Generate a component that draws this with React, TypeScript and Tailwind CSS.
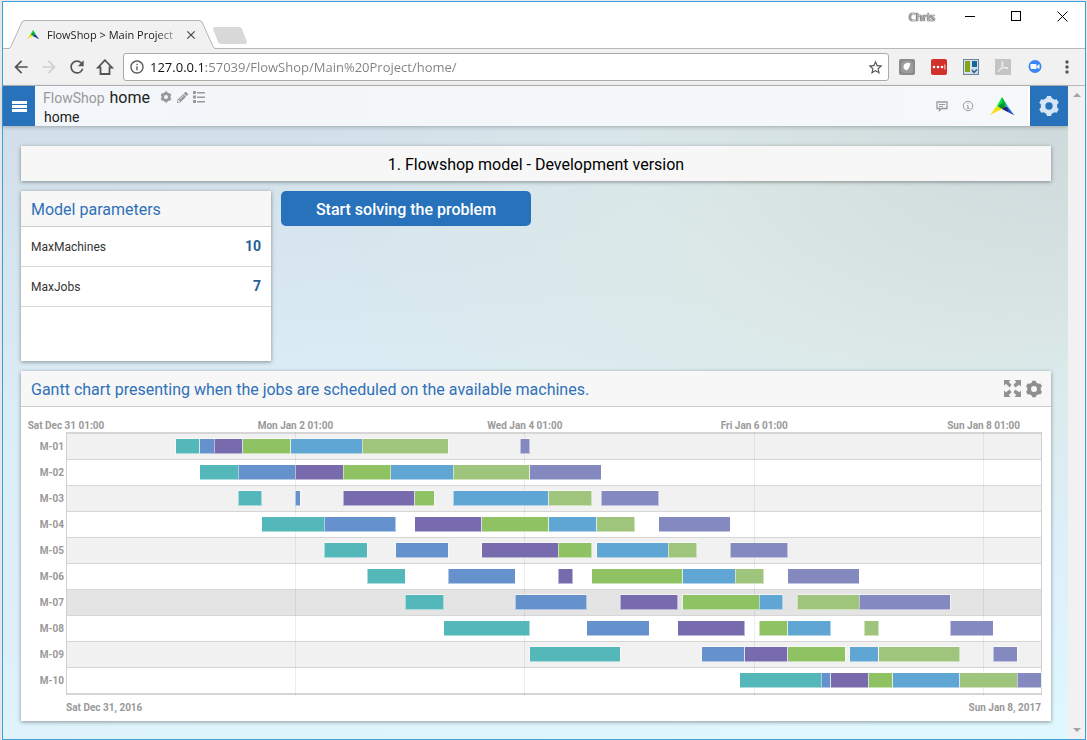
import { MdArrowBack, MdArrowForward, MdClose, MdInfoOutline, MdMoreVert, MdRefresh, MdStarBorder } from "react-icons/md";
import { FaPencilAlt } from "react-icons/fa";

const TOTAL_HOURS = 204;
const ROW_HEIGHT = 26;

const JOB_COLORS = ["#54b8ba", "#6592cd", "#776bad", "#8fc263", "#60a6d5", "#9ec57b", "#848ac0"];

type Machine = { name: string; row: string; jobs: [number, number][] };

const machines: Machine[] = [
  { name: "M-01", row: "#f1f1f1", jobs: [[23, 28], [28, 31], [31, 37], [37, 47], [47, 62], [62, 80], [95, 97]] },
  { name: "M-02", row: "#ffffff", jobs: [[28, 36], [36, 48], [48, 58], [58, 68], [68, 81], [81, 97], [97, 112]] },
  { name: "M-03", row: "#f1f1f1", jobs: [[36, 41], [48, 49], [58, 73], [73, 77], [81, 101], [101, 110], [112, 124]] },
  { name: "M-04", row: "#ffffff", jobs: [[41, 54], [54, 69], [73, 87], [87, 101], [101, 111], [111, 119], [124, 139]] },
  { name: "M-05", row: "#f1f1f1", jobs: [[54, 63], [69, 80], [87, 103], [103, 110], [111, 126], [126, 132], [139, 151]] },
  { name: "M-06", row: "#ffffff", jobs: [[63, 71], [80, 94], [103, 106], [110, 129], [129, 140], [140, 146], [151, 166]] },
  { name: "M-07", row: "#e4e4e4", jobs: [[71, 79], [94, 109], [116, 128], [129, 145], [145, 150], [153, 166], [166, 185]] },
  { name: "M-08", row: "#ffffff", jobs: [[79, 97], [109, 122], [128, 142], [145, 151], [151, 160], [167, 170], [185, 194]] },
  { name: "M-09", row: "#f1f1f1", jobs: [[97, 116], [133, 142], [142, 151], [151, 163], [164, 170], [170, 187], [194, 199]] },
  { name: "M-10", row: "#ffffff", jobs: [[141, 158], [158, 160], [160, 168], [168, 173], [173, 187], [187, 199], [199, 204]] },
];

const ticks = [
  { hour: 0, label: "Sat Dec 31 01:00" },
  { hour: 48, label: "Mon Jan 2 01:00" },
  { hour: 96, label: "Wed Jan 4 01:00" },
  { hour: 144, label: "Fri Jan 6 01:00" },
  { hour: 192, label: "Sun Jan 8 01:00" },
];

const pct = (hour: number) => `${(hour / TOTAL_HOURS) * 100}%`;

function Logo({ className }: { className: string }) {
  return (
    <svg viewBox="0 0 24 18" className={className} aria-hidden="true">
      <path d="M12 0 7 9l5 3z" fill="#00e63c" />
      <path d="M12 0 17 8l-5 4z" fill="#0ab43a" />
      <path d="M12 6 7.500 10l4.500 2 5-1z" fill="#0b8a33" />
      <path d="M7 9 0 18l12-6z" fill="#ffd91a" />
      <path d="M7 9 4 13l8-1z" fill="#d9e600" />
      <path d="M15 5l9 13-12-6 4.500-1z" fill="#3fb4f5" />
      <path d="M12 12l4.500-2.500L24 18z" fill="#26237e" />
      <path d="M17 11.500l7 6.500-5-2.500z" fill="#3d5df0" />
    </svg>
  );
}

function Gear({ className }: { className: string }) {
  return (
    <svg viewBox="0 0 24 24" className={className} aria-hidden="true">
      <circle cx="12" cy="12" r="6.500" fill="none" stroke="currentColor" strokeWidth="5" />
      {[0, 60, 120, 180, 240, 300].map((angle) => (
        <path key={angle} d="M7.500 5.500 9 3.500 9.800 1h4.400L15 3.500l1.500 2z" fill="currentColor" transform={`rotate(${angle} 12 12)`} />
      ))}
    </svg>
  );
}

function Expand() {
  return (
    <svg viewBox="0 0 18 18" className="size-[17px]" fill="#929292" aria-hidden="true">
      <path d="M0 0h7L5 2l3 3-2 3-4-4-2 2zM18 0v7l-2-2-4 3-2-3 3-3-2-2zM0 18v-7l2 2 4-3 2 3-3 3 2 2zM18 18h-7l2-2-3-3 2-3 4 3 2-2z" />
    </svg>
  );
}

function TabStrip() {
  return (
    <div className="flex h-[46px] items-end bg-white">
      <div className="relative -mb-px ml-0.5 flex h-[29px] w-[214px] items-center pl-[22px]">
        <svg className="absolute inset-0 size-full" viewBox="0 0 214 29" preserveAspectRatio="none" aria-hidden="true">
          <path d="M0 28.500h3q2 0 3-2L17 2q1-1.500 3-1.500H194q2 0 3 1.500l11 24.500q1 2 3 2h3" fill="#f1f1f1" stroke="#b4b4b4" />
          <path d="M5 28.500h204" stroke="#f1f1f1" />
        </svg>
        <Logo className="relative mr-2 h-[11px] w-3" />
        <span className="relative w-[133px] font-['Open_Sans',sans-serif] text-[11px] leading-4 whitespace-nowrap text-[#222] [mask-image:linear-gradient(to_right,#000_82%,rgba(0,0,0,0.15))]">
          FlowShop &gt; Main Project
        </span>
        <button aria-label="Close tab" className="relative ml-1 text-[#444]">
          <MdClose className="size-[14px]" />
        </button>
      </div>
      <button aria-label="New tab" className="-ml-1.5 mb-1">
        <svg viewBox="0 0 34 17" className="h-[17px] w-[34px]" aria-hidden="true">
          <path d="M2 0h24q2 0 3 2l5 13q0 2-2 2H8q-2 0-3-2L0 2q0-2 2-2z" fill="#d8d8d8" />
        </svg>
      </button>
      <div className="ml-auto flex h-full items-start text-black">
        <span className="mt-[7px] mr-3 font-['Open_Sans',sans-serif] text-[11px] leading-4 text-[#ddd] [text-shadow:0_0_1px_#222,0_0_1px_#222,0_0_1px_#333]">Chris</span>
        <button aria-label="Minimize" className="flex h-7 w-[46px] items-center justify-center">
          <span className="h-px w-[10px] bg-black" />
        </button>
        <button aria-label="Maximize" className="flex h-7 w-[46px] items-center justify-center">
          <span className="size-[10px] border border-black" />
        </button>
        <button aria-label="Close window" className="flex h-7 w-[46px] items-center justify-center">
          <svg viewBox="0 0 11 11" className="size-[11px]" stroke="#000" aria-hidden="true">
            <path d="M.5.5l10 10M10.500.5l-10 10" />
          </svg>
        </button>
      </div>
    </div>
  );
}

function Extensions() {
  return (
    <div className="flex items-center gap-4">
      <button aria-label="Shield extension">
        <svg viewBox="0 0 16 16" className="size-4" aria-hidden="true">
          <rect width="16" height="16" rx="2" fill="#8b8b8b" />
          <rect x="2" y="2" width="12" height="12" rx="4" fill="#9c9c9c" />
          <path d="M5.500 5q3-2 5.500-1 .5 5-3.500 7.500Q2.500 9.500 5.500 5z" fill="#fff" />
        </svg>
      </button>
      <button aria-label="Password extension">
        <svg viewBox="0 0 16 16" className="size-4" aria-hidden="true">
          <rect width="16" height="16" rx="2" fill="#d2302b" />
          <g fill="#fff">
            <circle cx="3" cy="8" r="1.300" />
            <circle cx="7" cy="8" r="1.300" />
            <circle cx="11" cy="8" r="1.300" />
            <path d="M13.500 5.500h.8v5h-.8z" />
          </g>
        </svg>
      </button>
      <button aria-label="Layout extension">
        <svg viewBox="0 0 16 16" className="size-4" aria-hidden="true">
          <rect x=".5" y=".5" width="15" height="15" fill="#d8e2ea" stroke="#6b8299" />
          <path d="M2 2h5v11H2z" fill="#86a31c" />
          <path d="M9 2h5v6H9z" fill="#14699b" />
          <path d="M8 9h7v6H8z" fill="#c5d9ea" />
          <path d="M9 11l2 2.500 3-3" fill="none" stroke="#325c80" strokeWidth="1.500" />
        </svg>
      </button>
      <button aria-label="PDF extension">
        <svg viewBox="0 0 16 16" className="size-4" aria-hidden="true">
          <rect width="16" height="16" fill="#c4c4c4" />
          <path d="M3 13q4-3 5-9 0-2-1-1-1 3 3 6 3 1 3 0-1-1-5 0-4 1-5 4z" fill="none" stroke="#f3f3f3" />
        </svg>
      </button>
      <button aria-label="Video call extension">
        <svg viewBox="0 0 16 16" className="size-4" aria-hidden="true">
          <circle cx="8" cy="7.500" r="6.500" fill="#3a86f5" />
          <path d="M3.500 5h5q1 0 1 1v4h-5q-1 0-1-1zM10 7l2.500-2v5L10 8.500z" fill="#fff" />
        </svg>
      </button>
    </div>
  );
}

function AddressBar() {
  return (
    <div className="flex h-[38px] items-center border-y border-[#b9b9b9] bg-[#f1f1f1] px-2 text-[#555]">
      <div className="flex items-center gap-2">
        <button aria-label="Back"><MdArrowBack className="size-5" /></button>
        <button aria-label="Forward" className="text-[#cfcfcf]"><MdArrowForward className="size-5" /></button>
        <button aria-label="Reload"><MdRefresh className="size-5" /></button>
        <button aria-label="Home">
          <svg viewBox="0 0 20 20" className="size-5" fill="none" stroke="currentColor" strokeWidth="1.800" aria-hidden="true">
            <path d="M10 3.200 3 10.500h2.500v6.500h9v-6.500H17z" />
          </svg>
        </button>
      </div>
      <div className="ml-2 flex h-7 flex-1 items-center rounded-[3px] border border-[#aaa] bg-white pr-1 pl-[5px]">
        <MdInfoOutline className="size-4" />
        <input
          type="text"
          aria-label="Address"
          defaultValue="127.0.0.1:57039/FlowShop/Main%20Project/home/"
          className="ml-[5px] h-5 min-w-0 flex-1 bg-[linear-gradient(to_right,#111_56px,#808080_56px)] bg-clip-text font-['Open_Sans',sans-serif] text-[13px] leading-5 text-transparent outline-none"
        />
        <button aria-label="Bookmark this page"><MdStarBorder className="size-[17px]" /></button>
      </div>
      <div className="ml-[10px]"><Extensions /></div>
      <button aria-label="Browser menu" className="ml-3.5"><MdMoreVert className="size-5" /></button>
    </div>
  );
}

function AppHeader() {
  return (
    <header className="flex h-10 bg-linear-to-r from-[#f3f6fa] via-[#f3f7f9] to-[#f6f8f9] shadow-[0_1px_4px_rgba(0,0,0,0.25)]">
      <button aria-label="Menu" className="flex w-8 flex-col items-center justify-center gap-px bg-[#2872bb]">
        <span className="h-[3px] w-[15px] bg-white" />
        <span className="h-[3px] w-[15px] bg-white" />
        <span className="h-[3px] w-[15px] bg-white" />
      </button>
      <div className="ml-2 pt-0.5">
        <div className="flex h-5 items-center">
          <a href="#app" className="text-[14px] leading-5 text-[#999]">FlowShop</a>
          <span className="ml-[5px] text-[16px] leading-5 text-[#222]">home</span>
          <span className="mb-0.5 ml-2.5 flex items-center gap-[5px] text-[#999]">
            <button aria-label="Page settings"><Gear className="size-3" /></button>
            <button aria-label="Edit page"><FaPencilAlt className="size-[11px]" /></button>
            <button aria-label="Page list">
              <svg viewBox="0 0 12 12" className="size-3" fill="currentColor" aria-hidden="true">
                <path d="M0 0h3v3H0zM0 4.500h3v3H0zM0 9h3v3H0zM4 1h8v1.500H4zM4 5.500h8V7H4zM4 10h8v1.500H4z" />
              </svg>
            </button>
          </span>
        </div>
        <div className="ml-px text-[14px] leading-[18px] text-[#222]">home</div>
      </div>
      <div className="ml-auto flex items-center text-[#999]">
        <button aria-label="Messages">
          <svg viewBox="0 0 12 12" className="size-3" fill="none" stroke="currentColor" aria-hidden="true">
            <path d="M1 2h10v6.500H5.500L3.500 10.500v-2H1z" strokeWidth="1.300" />
            <path d="M3 4.500h6M3 6.500h4" />
          </svg>
        </button>
        <button aria-label="Information" className="ml-3.5">
          <svg viewBox="0 0 12 12" className="size-3" fill="none" stroke="currentColor" aria-hidden="true">
            <circle cx="6" cy="6" r="4.700" />
            <path d="M5 5.500h1v3M4.800 8.500h2.600M5.500 3.500h1" />
          </svg>
        </button>
        <Logo className="ml-4 h-[18px] w-6" />
        <button aria-label="Settings" className="ml-3.5 flex h-full w-10 items-center justify-center border-l-2 border-white bg-[#2872bb] text-[#d5e5f5]">
          <Gear className="size-[22px]" />
        </button>
      </div>
    </header>
  );
}

const cardShadow = "shadow-[0_1px_4px_rgba(0,0,0,0.4)]";

function ParametersCard() {
  return (
    <section className={`${cardShadow} h-[170px] w-[250px] bg-white`}>
      <h2 className="h-9 border-b border-[#ccc] bg-[#f7f7f7] px-2.5 text-[16px] leading-[37px] text-[#2f71b8]">Model parameters</h2>
      <table className="w-full border-separate border-spacing-0">
        <tbody>
          {[["MaxMachines", 10], ["MaxJobs", 7]].map(([name, value]) => (
            <tr key={name}>
              <th scope="row" className="h-10 border-b border-[#d8d8d8] pl-2.5 text-left text-[12px] font-normal text-[#333]">{name}</th>
              <td className="h-10 border-b border-[#d8d8d8] pr-2.5 text-right text-[14px] font-bold text-[#245f97]">{value}</td>
            </tr>
          ))}
        </tbody>
      </table>
    </section>
  );
}

function GanttPlot() {
  const height = ROW_HEIGHT * machines.length + 1;
  return (
    <svg className="block h-[263px] w-full overflow-visible" shapeRendering="crispEdges" role="img" aria-label="Job schedule per machine">
      {machines.map((m, i) => (
        <g key={m.name}>
          <rect x="0" y={i * ROW_HEIGHT + 1} width="100%" height={ROW_HEIGHT} fill={m.row} />
          <rect x="0" y={i * ROW_HEIGHT + 1} width="100%" height="1" fill="#d6d6d6" />
        </g>
      ))}
      <rect x="0" y="0" width="100%" height="2" fill="#d6d6d6" />
      <rect x="0" y={height} width="100%" height="2" fill="#d6d6d6" />
      {ticks.slice(1).map((t) => (
        <line key={t.hour} x1={pct(t.hour)} x2={pct(t.hour)} y1="0" y2={height + 2} stroke="#000" strokeOpacity="0.07" />
      ))}
      <line x1="0" x2="0" y1="0" y2={height + 2} stroke="#d0d0d0" />
      <line x1="100%" x2="100%" y1="0" y2={height + 2} stroke="#d0d0d0" />
      {machines.map((m, i) =>
        m.jobs.map(([start, end], job) => (
          <rect
            key={`${m.name}-${job}`}
            x={pct(start)}
            y={i * ROW_HEIGHT + 6.5}
            width={pct(end - start)}
            height="15"
            fill={JOB_COLORS[job]}
            stroke="#fff"
            strokeOpacity="0.5"
          />
        )),
      )}
    </svg>
  );
}

function GanttCard() {
  return (
    <section className={`${cardShadow} bg-white`}>
      <div className="flex h-9 items-start border-b border-[#ccc] bg-[#f7f7f7] pr-2 pl-2.5">
        <h2 className="text-[16px] leading-[37px] text-[#2f71b8]">Gantt chart presenting when the jobs are scheduled on the available machines.</h2>
        <button aria-label="Full screen" className="ml-auto self-center"><Expand /></button>
        <button aria-label="Chart settings" className="ml-1 self-center text-[#8e8e8e]"><Gear className="size-[18px]" /></button>
      </div>
      <div className="flex pr-[10px] pb-[7px] text-[10px] leading-[12px] font-bold text-[#999]">
        <div className="w-[45px] shrink-0 pt-[27px] pr-0.5 text-right">
          {machines.map((m) => (
            <div key={m.name} className="h-[26px] leading-[26px]">{m.name}</div>
          ))}
        </div>
        <div className="min-w-0 flex-1 pt-[13px]">
          <div className="relative h-3 whitespace-nowrap">
            {ticks.map((t) => (
              <span key={t.hour} className="absolute -translate-x-1/2" style={{ left: pct(t.hour) }}>{t.label}</span>
            ))}
          </div>
          <GanttPlot />
          <div className="flex justify-between pt-[7px]">
            <span>Sat Dec 31, 2016</span>
            <span>Sun Jan 8, 2017</span>
          </div>
        </div>
      </div>
    </section>
  );
}

export default function App() {
  return (
    <div className="min-h-screen bg-[#e8e8e8] pt-px pr-px pl-0.5 font-[Roboto,sans-serif]">
      <div className="flex min-h-[calc(100vh-1px)] flex-col border border-[#3aa0e0]">
        <TabStrip />
        <AddressBar />
        <div className="flex flex-1">
          <div className="flex min-w-0 flex-1 flex-col bg-[radial-gradient(ellipse_at_100%_5%,#cdd9da_0%,transparent_30%),radial-gradient(ellipse_at_85%_25%,#dce8e6_0%,#dce9e8_15%,rgba(220,233,232,0)_45%),linear-gradient(175deg,#d0dde6_0%,#d6e4ed_22%,#dbedf5_45%,#deeffa_75%,#dff8fd_100%)]">
            <AppHeader />
            <main className="flex flex-col gap-2.5 pt-5 pr-[17px] pb-[18px] pl-[18px]">
              <h1 className={`${cardShadow} h-[35px] bg-[#f7f7f7] text-center text-[16px] leading-[37px] text-black`}>
                1. Flowshop model - Development version
              </h1>
              <div className="flex items-start gap-2.5">
                <ParametersCard />
                <button className="h-[35px] w-[250px] rounded-[5px] bg-[#2872bb] pt-0.5 text-[16px] font-medium text-white">
                  Start solving the problem
                </button>
              </div>
              <GanttCard />
            </main>
          </div>
          <div aria-hidden="true" className="flex w-[17px] flex-col items-center justify-between bg-[#f1f1f1] py-[7px]">
            <span className="border-x-4 border-b-4 border-x-transparent border-b-[#a3a3a3]" />
            <span className="border-x-4 border-t-4 border-x-transparent border-t-[#a3a3a3]" />
          </div>
        </div>
      </div>
    </div>
  );
}
